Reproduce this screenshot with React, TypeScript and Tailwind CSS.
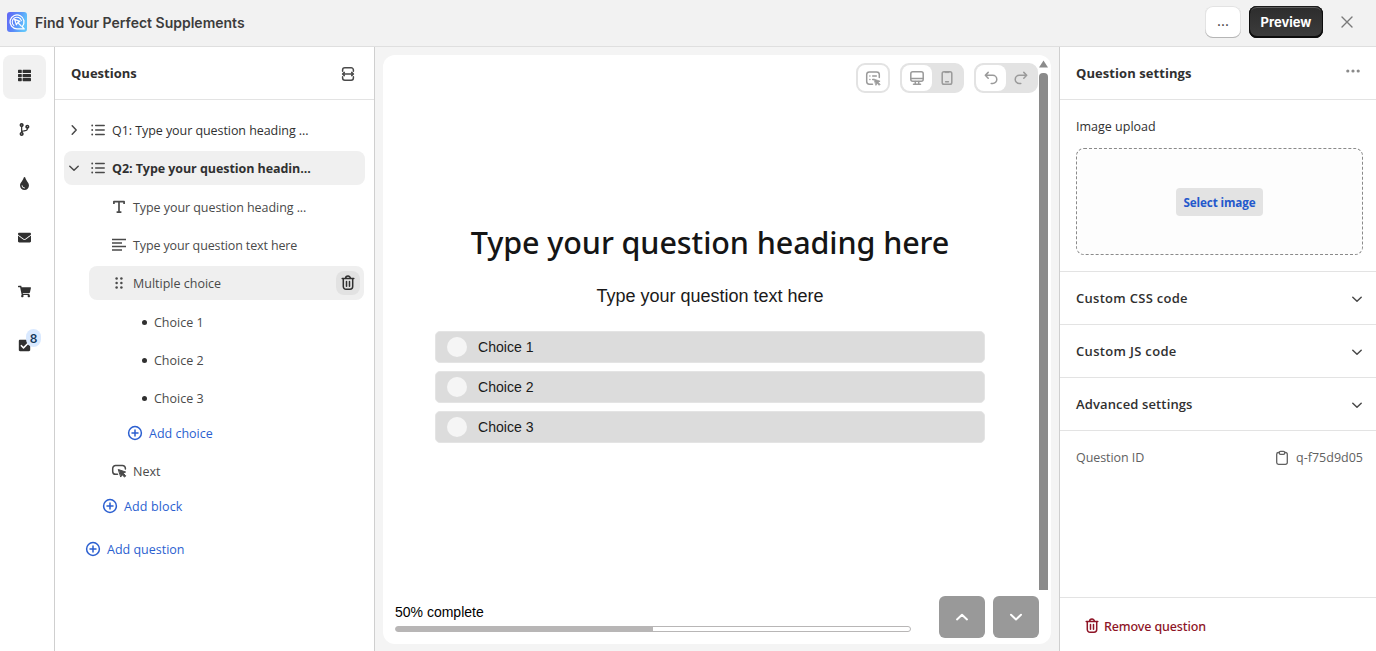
import React from "react";
import { FaThList, FaCodeBranch, FaTint, FaEnvelope, FaShoppingCart, FaCheckSquare } from "react-icons/fa";

type IconProps = { className?: string };

const Svg = ({ className = "", width = 1.5, children }: IconProps & { width?: number; children: React.ReactNode }) => (
  <svg viewBox="0 0 20 20" className={`shrink-0 ${className}`} fill="none" stroke="currentColor" strokeWidth={width} strokeLinecap="round" strokeLinejoin="round">
    {children}
  </svg>
);

const Logo = () => (
  <svg viewBox="0 0 20 20" className="h-5 w-5 shrink-0">
    <defs>
      <linearGradient id="logo" x1="0" y1="0" x2="1" y2="0.3">
        <stop offset="0" stopColor="#6264f5" />
        <stop offset="0.55" stopColor="#5a8cf8" />
        <stop offset="1" stopColor="#62c4fb" />
      </linearGradient>
    </defs>
    <rect width="20" height="20" rx="3" fill="url(#logo)" />
    <g fill="none" stroke="#fff" strokeLinejoin="round" strokeLinecap="round">
      <path strokeWidth="1.3" d="M17.2 16.9H10A7 7 0 1 1 15.2 14.6L17.2 16.9" />
      <path strokeWidth="1.1" d="M6.9 13.6A4.7 4.7 0 1 1 14.4 8.6" />
      <path strokeWidth="1.2" d="M7.6 7.4L12.9 9.4L10.8 10.5L14.3 14.1M7.6 7.4L9.4 12.8L10.8 10.5" />
    </g>
  </svg>
);

const ListIcon = () => (
  <Svg className="h-5 w-5">
    <path d="M7.7 5.5h8.5M7.7 10h8.5M7.7 14.5h8.5" />
    <path strokeWidth="1.9" d="M4.2 5.5h.01M4.2 10h.01M4.2 14.5h.01" />
  </Svg>
);
const Chevron = ({ className }: IconProps) => (
  <Svg className={className}>
    <path d="M5.8 8.2L10 12.2L14.2 8.2" />
  </Svg>
);
const Plus = () => (
  <Svg className="h-5 w-5">
    <circle cx="10" cy="10" r="6.4" />
    <path d="M10 7v6M7 10h6" />
  </Svg>
);
const Trash = ({ className = "" }: IconProps) => (
  <Svg className={className}>
    <path d="M4.2 5.6h11.6M7.6 5.4a2.4 2.4 0 0 1 4.8 0M5.3 6v7.5a2.7 2.7 0 0 0 2.7 2.7h4a2.7 2.7 0 0 0 2.7-2.7V6M8.5 8.6v4.6M11.5 8.6v4.6" />
  </Svg>
);
const TextT = () => (
  <Svg className="h-5 w-5" width={1.7}>
    <path strokeLinecap="butt" d="M4.9 7V4.6h10.2V7M10 4.6v10.6M7.6 15.2h4.8" />
  </Svg>
);
const AlignIcon = () => (
  <Svg className="h-5 w-5">
    <path strokeLinecap="butt" d="M3 4.5h14M3 8h10M3 11.5h14M3 15h10" />
  </Svg>
);
const Drag = () => (
  <svg viewBox="0 0 20 20" className="h-5 w-5 shrink-0" fill="currentColor">
    {[5.4, 10, 14.6].map((y) => (
      <g key={y}>
        <circle cx="7.6" cy={y} r="1.25" />
        <circle cx="12.4" cy={y} r="1.25" />
      </g>
    ))}
  </svg>
);
const ButtonPress = () => (
  <Svg className="h-5 w-5">
    <path d="M8.5 13.3H6.6A2.9 2.9 0 0 1 3.7 10.4V7.4A2.9 2.9 0 0 1 6.6 4.5h6.9a2.9 2.9 0 0 1 2.9 2.9v.6" />
    <path fill="currentColor" strokeWidth="1" d="M9.6 8.6l7 2.4-2.3 1.3 2.4 2.5-1.1 1.3-2.5-2.4-1.2 2z" />
  </Svg>
);
const Collapse = () => (
  <Svg className="h-5 w-5">
    <path d="M4.6 7.2V6a2.2 2.2 0 0 1 2.2-2.2h6.4A2.2 2.2 0 0 1 15.4 6v1.2M4.6 12.8V14a2.2 2.2 0 0 0 2.2 2.2h6.4a2.2 2.2 0 0 0 2.2-2.2v-1.2" />
    <path d="M4.7 10h10.6M6.3 8.4L4.6 10l1.7 1.6M13.7 8.4l1.7 1.6-1.7 1.6" />
  </Svg>
);
const FormPick = () => (
  <Svg className="h-5 w-5">
    <path d="M9.5 16.2H6.4a2.7 2.7 0 0 1-2.7-2.7V6.6a2.7 2.7 0 0 1 2.7-2.7h7.2a2.7 2.7 0 0 1 2.7 2.7v3M9.7 8h3.6M9.7 11.5h1M6.9 8h.01M6.9 11.5h.01" />
    <path fill="currentColor" strokeWidth="0.8" d="M11.2 11.2l5.9 2-2 1.1 2 2.1-.9.9-2.1-2-1 1.8z" />
  </Svg>
);
const Desktop = () => (
  <Svg className="h-5 w-5">
    <rect x="3.8" y="3.8" width="12.4" height="9.4" rx="2" />
    <path d="M4 10.4h12M8.3 13.4v2.8M11.7 13.4v2.8M6.5 16.3h7" />
  </Svg>
);
const Mobile = () => (
  <Svg className="h-5 w-5">
    <rect x="5.2" y="3.7" width="9.6" height="12.6" rx="1.8" />
    <path d="M8.6 13.8h2.8" />
    <path strokeWidth="1" d="M8 4.6h4" />
  </Svg>
);
const Undo = ({ className = "" }: IconProps) => (
  <Svg className={`h-5 w-5 ${className}`}>
    <path d="M7.2 4.4L4.3 7.3l2.9 2.9M4.5 7.3h7.2a4 4 0 0 1 0 8.2h-1.5" />
  </Svg>
);
const Clipboard = () => (
  <Svg className="h-5 w-5" width={1.3}>
    <path d="M7.2 4.5h-.7a1.8 1.8 0 0 0-1.8 1.8v8.2a1.8 1.8 0 0 0 1.8 1.8h7a1.8 1.8 0 0 0 1.8-1.8V6.3a1.8 1.8 0 0 0-1.8-1.8h-.7" />
    <rect x="7.3" y="3.4" width="5.4" height="2.9" rx="1.2" />
  </Svg>
);

const Divider = () => <div className="h-px shrink-0 bg-[#e3e3e3]" />;

const ChildRow = ({ icon, children, className = "", textClass = "" }: { icon: React.ReactNode; children: React.ReactNode; className?: string; textClass?: string }) => (
  <div className={`flex h-[38px] items-center ${className}`}>
    {icon}
    <span className={`pt-[2px] ${textClass}`}>{children}</span>
  </div>
);

const Bullet = () => (
  <span className="flex h-5 w-5 shrink-0 items-center justify-center">
    <span className="h-[5px] w-[5px] rounded-full bg-[#303030]" />
  </span>
);

const Section = ({ title, textClass }: { title: string; textClass: string }) => (
  <>
    <div className="flex h-[52px] items-center justify-between pr-[9px] pl-4 text-[#303030]">
      <span className={`pt-[2px] text-[13px] font-semibold ${textClass}`}>{title}</span>
      <Chevron className="mt-[2px] h-5 w-5 text-[#4a4a4a]" />
    </div>
    <Divider />
  </>
);

const Choice = ({ label }: { label: string }) => (
  <div className="flex h-8 items-center gap-[11px] rounded-[5px] border border-[#e4e4e4] bg-[#dcdcdc] pl-[11px]">
    <span className="h-5 w-5 rounded-full bg-[#f5f5f5]" />
    <span className="pt-px font-['Liberation_Sans',sans-serif] text-[14.1px] leading-5 text-[#1a1a1a]">{label}</span>
  </div>
);

export default function App() {
  return (
    <div className="flex h-[651px] w-[1376px] flex-col overflow-hidden bg-white font-['Open_Sans',sans-serif] text-[12.5px] text-[#303030]">
      <header className="flex h-[47px] shrink-0 items-center border-b border-[#dfdfdf] bg-[#f2f2f2] pr-[23px] pb-[2px] pl-[7px] font-['Inter',sans-serif]">
        <Logo />
        <h1 className="ml-2 text-[14px] font-semibold text-[#3c3c3c]">Find Your Perfect Supplements</h1>
        <div className="ml-auto flex items-center">
          <button className="flex h-8 w-9 items-center justify-center rounded-lg bg-white text-[13px] font-medium shadow-[inset_0_-1px_0_#b5b5b5,inset_0_0_0_1px_#e3e3e3]">...</button>
          <button className="ml-2 h-8 w-[74px] rounded-lg bg-linear-to-b from-[#2c2c2c] to-[#3d3d3d] pt-[2px] text-[13px] font-bold text-white shadow-[inset_0_-1px_0_1px_#0d0d0d,inset_0_0_0_1px_#1c1c1c,inset_0_2px_0_#5c5c5c]">Preview</button>
          <svg viewBox="0 0 12 12" className="ml-[18px] h-3 w-3" stroke="#7a7a7a" strokeWidth="1.4" strokeLinecap="round">
            <path d="M1 1l10 10M11 1L1 11" />
          </svg>
        </div>
      </header>

      <div className="flex min-h-0 flex-1">
        <nav className="flex w-[55px] shrink-0 flex-col items-center gap-[10px] border-r border-[#cfcfcf] pt-2 pr-[5px] text-[13px]">
          <div className="flex h-11 w-[43px] items-center justify-center rounded-lg bg-[#f1f1f1] pb-[3px]"><FaThList /></div>
          <div className="flex h-11 w-[43px] items-center justify-center pb-[3px]"><FaCodeBranch /></div>
          <div className="flex h-11 w-[43px] items-center justify-center pb-[3px]"><FaTint /></div>
          <div className="flex h-11 w-[43px] items-center justify-center pb-[3px]"><FaEnvelope /></div>
          <div className="flex h-11 w-[43px] items-center justify-center pb-[3px]"><FaShoppingCart /></div>
          <div className="relative flex h-11 w-[43px] items-center justify-center pb-[3px]">
            <FaCheckSquare />
            <span className="absolute top-[4px] left-[23px] flex h-[18px] w-[15px] items-center justify-center rounded-lg bg-[#d9e9ff] pt-px font-['Inter',sans-serif] text-[12px] font-semibold text-[#15395c]">8</span>
          </div>
        </nav>

        <aside className="flex w-[320px] shrink-0 flex-col border-r border-[#cfcfcf] text-[#4a4a4a]">
          <div className="flex h-[52px] items-center justify-between pt-[2px] pr-4 pl-4">
            <h2 className="text-[13px] font-bold text-[#303030]">Questions</h2>
            <Collapse />
          </div>
          <Divider />
          <div className="flex flex-col pt-[13px] pr-[9px] pl-[9px]">
            <div className="flex h-[34px] items-center">
              <Chevron className="h-5 w-5 -rotate-90" />
              <span className="ml-1 flex items-center gap-1"><ListIcon /><span className="pt-[2px] tracking-[-0.005em] text-[#303030]">Q1: Type your question heading ...</span></span>
            </div>
            <div className="mt-1 flex h-[34px] items-center rounded-lg bg-[#f0f0f0]">
              <Chevron className="h-5 w-5" />
              <span className="ml-1 flex items-center gap-1"><ListIcon /><span className="pt-[2px] font-bold tracking-[-0.005em] text-[#303030]">Q2: Type your question headin...</span></span>
            </div>
            <ChildRow className="mt-[3px] gap-1 pl-[45px]" textClass="tracking-[-0.005em]" icon={<TextT />}>Type your question heading ...</ChildRow>
            <ChildRow className="gap-1 pl-[45px]" textClass="tracking-[-0.01em]" icon={<AlignIcon />}>Type your question text here</ChildRow>
            <div className="mt-[2px] ml-[25px] flex h-[34px] w-[275px] items-center gap-1 rounded-lg bg-[#efefef] pr-1 pl-5">
              <Drag />
              <span className="pt-[2px]">Multiple choice</span>
              <span className="ml-auto flex h-6 w-6 items-center justify-center rounded-lg bg-[#e2e2e2] text-[#303030]"><Trash className="h-5 w-5" /></span>
            </div>
            <ChildRow className="mt-[3px] pl-[70px]" icon={<Bullet />}>Choice 1</ChildRow>
            <ChildRow className="pl-[70px]" icon={<Bullet />}>Choice 2</ChildRow>
            <ChildRow className="pl-[70px]" icon={<Bullet />}>Choice 3</ChildRow>
            <ChildRow className="-mt-[3px] gap-1 pl-[61px] text-[#2b5fd0]" icon={<Plus />}>Add choice</ChildRow>
            <ChildRow className="gap-1 pl-[45px]" icon={<ButtonPress />}>Next</ChildRow>
            <ChildRow className="-mt-[3px] gap-1 pl-[36px] text-[#2b5fd0]" textClass="tracking-[0.01em]" icon={<Plus />}>Add block</ChildRow>
            <ChildRow className="mt-[5px] gap-1 pl-[19px] text-[#2b5fd0]" icon={<Plus />}>Add question</ChildRow>
          </div>
        </aside>

        <main className="flex w-[684px] shrink-0 bg-[#f4f4f4] px-2 pt-2 pb-[7px]">
          <div className="flex w-[668px] flex-col rounded-xl bg-white">
            <div className="flex min-h-0 flex-1">
              <div className="flex w-[656px] flex-col">
                <div className="flex items-center justify-end gap-[10px] pt-2 pr-px text-[#9a9a9a]">
                  <div className="flex h-[30px] w-[34px] items-center justify-center rounded-[9px] border-2 border-[#e3e3e3]"><FormPick /></div>
                  <div className="flex h-[30px] w-16 rounded-[9px] border-2 border-[#e3e3e3] bg-[#e3e3e3]">
                    <span className="flex w-[30px] items-center justify-center rounded-lg bg-white"><Desktop /></span>
                    <span className="flex w-[30px] items-center justify-center"><Mobile /></span>
                  </div>
                  <div className="flex h-[30px] w-16 rounded-[9px] border-2 border-[#e3e3e3] bg-[#e3e3e3]">
                    <span className="flex w-[30px] items-center justify-center rounded-lg bg-white"><Undo /></span>
                    <span className="flex w-[30px] items-center justify-center"><Undo className="-scale-x-100" /></span>
                  </div>
                </div>
                <div className="mt-[128px] ml-[52px] flex w-[550px] flex-col">
                  <h3 className="text-center font-['Noto_Sans','Open_Sans',sans-serif] text-[30.5px] leading-[42px] font-medium tracking-[-0.003em] whitespace-nowrap text-[#151515]">Type your question heading here</h3>
                  <p className="mt-[22px] text-center font-['Liberation_Sans',sans-serif] text-[18px] leading-[22px] text-[#1a1a1a]">Type your question text here</p>
                  <div className="mt-[23.5px] flex flex-col gap-2">
                    <Choice label="Choice 1" />
                    <Choice label="Choice 2" />
                    <Choice label="Choice 3" />
                  </div>
                </div>
              </div>
              <div className="flex w-[9px] flex-col items-center pt-[5px]">
                <svg viewBox="0 0 9 8" className="h-2 w-[9px] shrink-0"><path d="M4.5 0.5L9 7.5H0z" fill="#8b8b8b" /></svg>
                <div className="mt-[5px] w-[9px] flex-1 rounded-t-[4px] bg-[#8a8a8a]" />
              </div>
            </div>
            <div className="flex h-[54px] items-center gap-2 pr-3 pl-3">
              <div className="mr-5 flex-1">
                <p className="font-['Liberation_Sans',sans-serif] text-[14px] leading-5 text-black">50% complete</p>
                <div className="mt-1 h-[6px] rounded-full border border-[#b8b6b6]"><div className="h-full w-1/2 bg-[#b8b6b6]" /></div>
              </div>
              <div className="flex h-[42px] w-[46px] items-center justify-center rounded-md bg-[#999] text-white"><Svg className="h-5 w-5" width={2}><path d="M5 12.4L10 7.8L15 12.4" /></Svg></div>
              <div className="flex h-[42px] w-[46px] items-center justify-center rounded-md bg-[#999] text-white"><Svg className="h-5 w-5" width={2}><path d="M5 7.8L10 12.4L15 7.8" /></Svg></div>
            </div>
          </div>
        </main>

        <aside className="flex w-[317px] shrink-0 flex-col border-l border-[#cfcfcf]">
          <div className="flex h-[52px] items-center justify-between pr-4 pl-4">
            <h2 className="pt-[2px] text-[13px] font-bold tracking-[0.005em]">Question settings</h2>
            <svg viewBox="0 0 14 4" className="mb-1 h-1 w-[14px]" fill="#8a8a8a"><circle cx="1.8" cy="2" r="1.6" /><circle cx="7" cy="2" r="1.6" /><circle cx="12.2" cy="2" r="1.6" /></svg>
          </div>
          <Divider />
          <div className="flex h-[171px] flex-col pt-[17px] pr-[13px] pl-4">
            <span className="leading-5">Image upload</span>
            <div className="mt-[11px] flex h-[107px] items-center justify-center rounded-lg border border-dashed border-[#8a8a8a] bg-[#fdfdfd]">
              <button className="h-7 w-[87px] rounded bg-[#e3e3e3] pt-[2px] text-[11.7px] font-bold tracking-[-0.01em] text-[#2458cc]">Select image</button>
            </div>
          </div>
          <Divider />
          <Section title="Custom CSS code" textClass="tracking-[0.022em]" />
          <Section title="Custom JS code" textClass="tracking-[0.025em]" />
          <Section title="Advanced settings" textClass="tracking-[0.01em]" />
          <div className="flex h-[52px] items-center pt-[2px] pr-[13px] pl-4 text-[#616161]">
            <span className="tracking-[-0.005em]">Question ID</span>
            <span className="ml-auto flex items-center gap-1"><Clipboard /><span>q-f75d9d05</span></span>
          </div>
          <div className="mt-auto" />
          <Divider />
          <div className="flex h-[53px] shrink-0 items-center gap-[2px] pl-[22px] text-[#8e1426]">
            <Trash className="mt-[3px] h-5 w-5" />
            <span className="mt-[5px] font-['Noto_Sans','Open_Sans',sans-serif] text-[12.5px] font-medium tracking-[-0.01em]">Remove question</span>
          </div>
        </aside>
      </div>
    </div>
  );
}
